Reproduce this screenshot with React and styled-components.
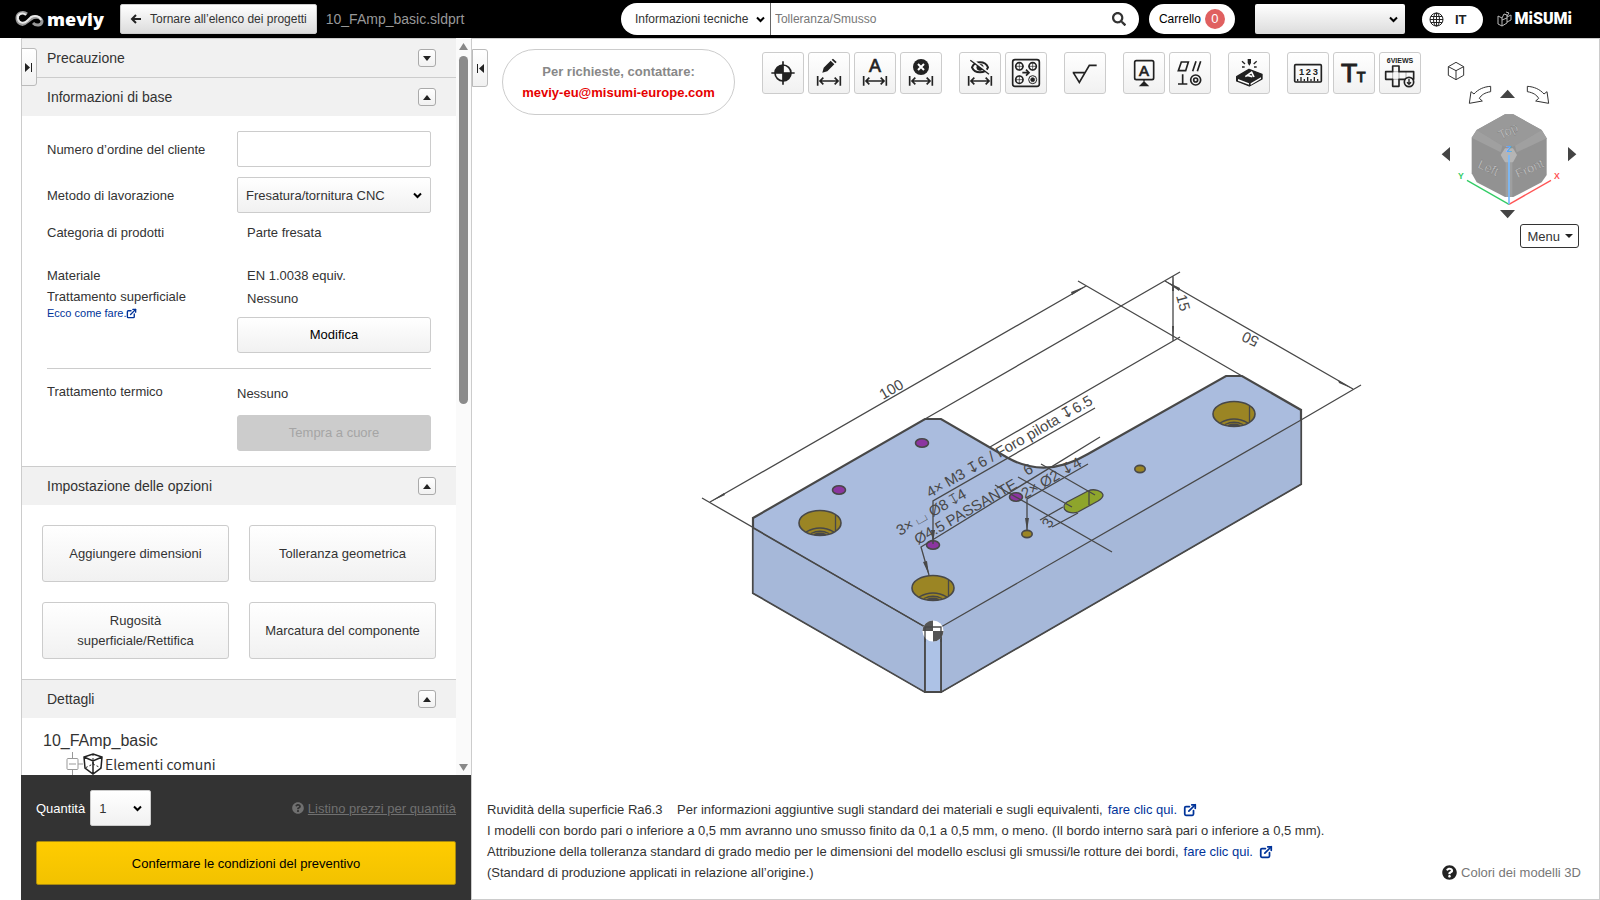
import React, { useState } from "react";
import styled, { createGlobalStyle } from "styled-components";
import { FaSearch, FaQuestionCircle } from "react-icons/fa";
import { FiExternalLink } from "react-icons/fi";

const GlobalStyle = createGlobalStyle`
    * { box-sizing: border-box; }
    body {
        margin: 0;
        background: #fff;
        color: #333;
        font-family: "Liberation Sans", Arial, sans-serif;
        font-size: 13px;
    }
    button, input, select { font-family: inherit; font-size: 13px; color: #333; margin: 0; }
    button { cursor: pointer; padding: 0; }
    svg { display: block; flex: none; }
`;

const Page = styled.div`
    display: flex;
    flex-direction: column;
    height: 100vh;
`;

/* ---------- header ---------- */
const Header = styled.header`
    display: flex;
    align-items: center;
    height: 38px;
    padding: 0 28px 0 15px;
    background: #000;
`;
const Brand = styled.a`
    display: flex;
    align-items: center;
    gap: 3px;
    width: 105px;
    color: #fff;
    font: 800 18px/30px "Open Sans", sans-serif;
    text-decoration: none;
`;
const BackButton = styled.button`
    display: flex;
    align-items: center;
    gap: 9px;
    height: 30px;
    padding: 0 9px;
    border: 1px solid #ccc;
    border-radius: 2px;
    background: linear-gradient(#fff, #dcdcdc);
    font-size: 12px;
    white-space: nowrap;
`;
const FileName = styled.span`
    flex: 1;
    padding-left: 9px;
    color: #999;
    font-size: 14px;
`;
const SearchBox = styled.form`
    display: flex;
    align-items: center;
    width: 518px;
    height: 32px;
    padding: 0 13px 0 10px;
    border-radius: 16px;
    background: #fff;
`;
const SearchInput = styled.input`
    flex: 1;
    border: 0;
    padding: 0 4px;
    outline: 0;
    font-size: 12px;
    &::placeholder { color: #777; }
`;
const IconButton = styled.button`
    border: 0;
    background: transparent;
`;
const Cart = styled.button`
    display: flex;
    align-items: center;
    gap: 4px;
    height: 30px;
    margin: 0 20px 0 10px;
    padding: 0 10px;
    border: 0;
    border-radius: 15px;
    background: #fff;
    color: #000;
    font-size: 12px;
`;
const Badge = styled.span`
    width: 20px;
    border-radius: 10px;
    background: #e06060;
    color: #fff;
    font-size: 13px;
    line-height: 20px;
    text-align: center;
`;
const Lang = styled.button`
    display: flex;
    align-items: center;
    gap: 11px;
    height: 27px;
    margin-left: 17px;
    padding: 0 16px 0 7px;
    border: 0;
    border-radius: 14px;
    background: #fff;
    color: #222;
    font-weight: 700;
`;
const Maker = styled.a`
    display: flex;
    align-items: center;
    gap: 3px;
    margin-left: 14px;
    color: #fff;
    font: 900 16px/30px Roboto, sans-serif;
    text-decoration: none;
`;

/* ---------- drop-downs ---------- */
const SelectBox = styled.span`
    position: relative;
    display: block;
    width: ${(props) => props.$width || "100%"};
    svg {
        position: absolute;
        top: 50%;
        right: ${(props) => props.$inset || 9}px;
        margin-top: -3px;
        pointer-events: none;
    }
`;
const Select = styled.select`
    appearance: none;
    display: block;
    width: 100%;
    height: 36px;
    padding: 0 20px 0 8px;
    border: 1px solid #ccc;
    border-radius: 2px;
    background: linear-gradient(#fff, #f1f1f1);
`;
const SearchKind = styled(Select)`
    height: 32px;
    padding: 0 16px 0 4px;
    border-width: 0 1px 0 0;
    border-color: #666;
    border-radius: 0;
    background: transparent;
    font-size: 12px;
`;
const UserSelect = styled(Select)`
    height: 30px;
    border: 0;
    background: linear-gradient(#fff, #dcdcdc);
`;

/* ---------- left panel ---------- */
const Body = styled.div`
    display: flex;
    flex: 1;
    min-height: 0;
    padding-left: 21px;
`;
const Side = styled.aside`
    position: relative;
    display: flex;
    flex-direction: column;
    width: 450px;
`;
const Scroller = styled.div`
    display: flex;
    flex: 1;
    min-height: 0;
    border-left: 1px solid #ccc;
`;
const Sections = styled.div`
    flex: 1;
    overflow: hidden;
`;
const ScrollTrack = styled.div`
    display: flex;
    flex-direction: column;
    align-items: center;
    width: 15px;
    padding: 5px 0 4px;
    background: #fafafa;
`;
const ScrollThumb = styled.div`
    width: 9px;
    height: 348px;
    margin: 6px 0 auto;
    border-radius: 5px;
    background: #8b8b8b;
`;
const SectionHead = styled.div`
    display: flex;
    align-items: center;
    justify-content: space-between;
    height: 39px;
    padding: 0 20px 0 25px;
    border-top: 1px solid #ccc;
    background: #f1f1f1;
`;
const SectionTitle = styled.h2`
    margin: 0;
    font-size: 14px;
    font-weight: 400;
`;
const Fold = styled.button`
    display: grid;
    place-items: center;
    width: 18px;
    height: 18px;
    border: 1px solid #aaa;
    border-radius: 3px;
    background: linear-gradient(#fff, #f1f1f1);
`;
const BasicInfo = styled.div`
    padding: 15px 25px 7px;
`;
const FieldRow = styled.div`
    display: grid;
    grid-template-columns: 190px 1fr;
    align-items: ${(props) => (props.$top ? "start" : "center")};
    margin-bottom: ${(props) => props.$gap || 0}px;
    line-height: 21px;
`;
const Value = styled.div`
    padding-left: ${(props) => (props.$flush ? 0 : 10)}px;
    line-height: ${(props) => props.$line || 20}px;
`;
const TextInput = styled.input`
    width: 100%;
    height: 36px;
    padding: 0 8px;
    border: 1px solid #ccc;
    border-radius: 2px;
`;
const GreyButton = styled.button`
    width: 100%;
    height: ${(props) => props.$height || 36}px;
    margin-top: ${(props) => props.$space || 0}px;
    padding: 0 14px;
    border: 1px solid #ccc;
    border-radius: 3px;
    background: linear-gradient(#fff, #f1f1f1);
    line-height: 20px;
    color: ${(props) => (props.$strong ? "#000" : "#333")};
    &:disabled { background: #ccc; color: #a5a5a5; }
`;
const Rule = styled.hr`
    margin: 15px 0 12px;
    border: 0;
    border-top: 1px solid #ccc;
`;
const BlueLink = styled.a`
    display: flex;
    align-items: center;
    gap: ${(props) => (props.$small ? 0 : 6)}px;
    color: #039;
    font-size: ${(props) => (props.$small ? 11 : 13)}px;
    line-height: ${(props) => (props.$small ? 13 : 21)}px;
    text-decoration: none;
`;
const Options = styled.div`
    display: grid;
    grid-template-columns: 1fr 1fr;
    gap: 20px;
    padding: 20px;
`;
const Tree = styled.div`
    padding: 12px 20px 0 21px;
`;
const TreeTitle = styled.div`
    font-size: 16px;
    line-height: 22px;
`;
const TreeRow = styled.div`
    display: flex;
    align-items: center;
    padding-left: 23px;
    font-family: "Noto Sans CJK JP", sans-serif;
    font-size: 14px;
    line-height: 24px;
`;
const Order = styled.div`
    height: 125px;
    padding: 15px;
    background: #333;
    color: #fff;
`;
const OrderRow = styled.div`
    display: flex;
    align-items: center;
    gap: 5px;
    margin-bottom: 15px;
`;
const PriceLink = styled.a`
    display: flex;
    align-items: center;
    gap: 4px;
    margin-left: auto;
    color: #707070;
    text-decoration: none;
    span { text-decoration: underline; }
`;
const Confirm = styled.button`
    width: 100%;
    height: 44px;
    border: 1px solid #a88a10;
    border-radius: 2px;
    background: linear-gradient(#fc0, #f2c200);
    color: #000;
`;
const SideTab = styled.button`
    position: absolute;
    top: 10px;
    left: 0;
    z-index: 1;
    display: grid;
    place-items: center;
    width: 16px;
    height: 38px;
    border: 1px solid #bbb;
    border-radius: 0 3px 3px 0;
    background: linear-gradient(#fff, #f1f1f1);
`;

/* ---------- viewer ---------- */
const Viewer = styled.main`
    position: relative;
    display: flex;
    flex: 1;
    flex-direction: column;
    min-width: 0;
    border: 1px solid #ccc;
`;
const ViewerTop = styled.div`
    display: flex;
    align-items: flex-start;
    padding: 10px 11px 0 30px;
`;
const Contact = styled.div`
    width: 233px;
    height: 66px;
    padding: 11px 0;
    border: 1px solid #ccc;
    border-radius: 33px;
    color: #888;
    font-weight: 700;
    line-height: 21px;
    text-align: center;
    a { color: #e60000; text-decoration: none; }
`;
const Toolbar = styled.div`
    display: flex;
    gap: 17px;
    margin: 3px auto 0 27px;
`;
const ToolGroup = styled.div`
    display: flex;
    gap: 4px;
`;
const Tool = styled.button`
    width: 42px;
    height: 42px;
    border: 1px solid #ccc;
    border-radius: 3px;
    background: linear-gradient(#fff, #f1f1f1);
    svg text { fill: #222; }
`;
const Navigator = styled.div`
    display: flex;
    flex-direction: column;
    align-items: flex-end;
    padding-top: 11px;
`;
const MenuButton = styled.button`
    display: flex;
    align-items: center;
    gap: 5px;
    height: 24px;
    margin: 4px 9px 0 0;
    padding: 0 5px 0 6px;
    border: 1px solid #333;
    border-radius: 3px;
    background: #fff;
`;
const Stage = styled.div`
    display: flex;
    flex: 1;
    align-items: flex-start;
    justify-content: center;
    padding-top: 12px;
    min-height: 0;
`;
const Notes = styled.footer`
    display: flex;
    align-items: flex-end;
    justify-content: space-between;
    padding: 0 18px 16px 15px;
    line-height: 21px;
    p { margin: 0; display: flex; gap: 5px; }
`;
const Legend = styled.a`
    display: flex;
    align-items: center;
    gap: 4px;
    color: #777;
    text-decoration: none;
    svg { color: #222; }
`;

const Triangle = ({ dir = "down", w = 8, h = 5, color = "#222" }) => (
    <svg width={w} height={h} viewBox="0 0 10 6" preserveAspectRatio="none" fill={color}>
        <path d={dir === "down" ? "M0 0H10L5 6Z" : "M0 6H10L5 0Z"} />
    </svg>
);

const Chevron = () => (
    <svg width="9" height="7" viewBox="0 0 9 7" fill="none" stroke="#000" strokeWidth="2">
        <path d="M1 1.500l3.500 3.500L8 1.500" />
    </svg>
);

const InfinityMark = () => (
    <svg width="29" height="17" viewBox="0 0 29 17" fill="none">
        <path d="M12 3C8 0 2 2 2 7s5 9 10 4l4-3c4-3 10-2 11 2 0 5-6 5-9 2" stroke="#999" strokeWidth="3" />
        <path d="M11 4C7 1 2 3 3 8c1 4 6 5 9 2l4-4c4-2 9-1 10 3" stroke="#e8e8e8" strokeWidth="2" />
    </svg>
);

const MakerMark = () => (
    <svg width="15" height="16" viewBox="0 0 15 16" fill="none" stroke="#bbb">
        <path d="M1 5l4 2v8l-4-2zM5 15l5-3V7L5 9M5 7l2-4 3 1v3M10 11l4-2V4l-4 2M9 1l3 1-2 3" />
    </svg>
);

const Globe = () => (
    <svg width="15" height="15" viewBox="0 0 15 15" fill="none" stroke="#222">
        <circle cx="7.5" cy="7.5" r="6.5" />
        <ellipse cx="7.5" cy="7.5" rx="3" ry="6.5" />
        <path d="M7.5 1v13M1 7.5h13M2 4.5h11M2 10.5h11" />
    </svg>
);

// arrow between two bars, shared by the dimension tools
const DimArrow = () => (
    <path d="M29 72v29M97 72v29M37 87h53M46 77l-10 10 10 10M80 77l10 10-10 10" strokeWidth="5" />
);

const toolIcons = {
    origin: (
        <>
            <circle cx="63" cy="63" r="24" strokeWidth="5" />
            <path d="M63 28v70M28 63h70" strokeWidth="5" />
            <path d="M63 63V39A24 24 0 0 0 39 63zM63 63v24a24 24 0 0 0 24-24z" fill="#222" />
        </>
    ),
    edit: (
        <>
            <path d="M43 62l4-15 21-21 11 11-21 21zM71 23l4-3 11 10-4 4z" fill="#222" stroke="none" />
            <DimArrow />
        </>
    ),
    text: (
        <>
            <text x="63" y="61" fontSize="54" textAnchor="middle" strokeWidth="2">A</text>
            <DimArrow />
        </>
    ),
    remove: (
        <>
            <circle cx="63" cy="45" r="24" fill="#222" stroke="none" />
            <path d="M54 36l18 18M72 36L54 54" stroke="#fff" strokeWidth="6" />
            <DimArrow />
        </>
    ),
    hide: (
        <>
            <path d="M39 46c8-20 40-20 48 0-8 20-40 20-48 0z" strokeWidth="6" />
            <circle cx="63" cy="46" r="10" fill="#222" />
            <path d="M38 22l54 42" stroke="#f8f8f8" strokeWidth="7" />
            <path d="M34 25l56 42" strokeWidth="4" />
            <DimArrow />
        </>
    ),
    holes: (
        <>
            <rect x="23" y="23" width="80" height="80" rx="7" strokeWidth="5" />
            <g strokeWidth="5">
                <circle cx="43" cy="43" r="11" />
                <circle cx="83" cy="43" r="11" />
                <circle cx="43" cy="83" r="11" />
            </g>
            <path d="M43 30v26M30 43h26M83 30v26M70 43h26M43 70v26M30 83h26" strokeWidth="2" />
            <circle cx="83" cy="83" r="12" strokeWidth="3" />
            <circle cx="83" cy="83" r="6" fill="#222" strokeWidth="2" />
            <path d="M52 62h18M63 53l9 9-9 9" strokeWidth="5" />
        </>
    ),
    surface: <path d="M26 62h37M28 62l18 29 30-51h22" strokeWidth="5" />,
    datum: (
        <>
            <rect x="35" y="26" width="57" height="57" rx="5" strokeWidth="5" />
            <text x="63" y="71" fontSize="45" textAnchor="middle" strokeWidth="2">A</text>
            <path d="M63 83v12M52 101l11-11 11 11z" fill="#222" strokeWidth="4" />
        </>
    ),
    geometric: (
        <>
            <path d="M37 30h21l-8 26H28zM81 28l-10 30M95 28L85 58M27 96h28M41 67v29" strokeWidth="5" />
            <circle cx="80" cy="84" r="15" strokeWidth="5" />
            <circle cx="80" cy="84" r="6" strokeWidth="5" />
        </>
    ),
    laser: (
        <>
            <path d="M26 74l37-22 39 15v14L64 102 26 87z" fill="#222" strokeWidth="4" strokeLinejoin="round" />
            <path d="M30 81l33 13v4L30 86zM68 94l31-18v4L68 99z" fill="#fff" stroke="none" />
            <path d="M52 74l19-13 7 14M58 70l15 4" stroke="#fff" strokeWidth="5" />
            <path d="M59 21h10v12l-5 8-5-8z" fill="#222" stroke="none" />
            <path d="M42 28l9 8M86 28l-9 8M42 45h8M78 45h8" strokeWidth="4" />
        </>
    ),
    ruler: (
        <>
            <rect x="23" y="38" width="80" height="52" rx="3" strokeWidth="5" />
            <g fontSize="28" fontWeight="700" textAnchor="middle" stroke="none">
                <text x="44" y="69">1</text>
                <text x="64" y="69">2</text>
                <text x="85" y="69">3</text>
            </g>
            <path d="M32 88v-7M42 88V75M52 88v-7M62 88V75M72 88v-7M82 88V75M92 88v-7" strokeWidth="4" />
        </>
    ),
    font: (
        <>
            <text x="24" y="91" fontSize="80" strokeWidth="3">T</text>
            <text x="71" y="91" fontSize="43" strokeWidth="3">T</text>
        </>
    ),
    views: (
        <>
            <text x="63" y="33" fontSize="21" fontWeight="700" textAnchor="middle" stroke="none">6VIEWS</text>
            <path d="M41 42h19v17h44v23H60v21H41V82H20V59h21z" strokeWidth="5" strokeLinejoin="round" />
            <path d="M41 59h19v23H41zM81 59v22" strokeWidth="1" />
            <circle cx="90" cy="90" r="14" fill="#f5f5f5" strokeWidth="5" />
            <path d="M90 81v15M84 91l6 6 6-6" strokeWidth="4" />
        </>
    ),
};

const toolGroups = [
    [["origin", "Origine"], ["edit", "Modifica quota"], ["text", "Testo quota"], ["remove", "Elimina quota"]],
    [["hide", "Nascondi quota"], ["holes", "Gruppi di fori"]],
    [["surface", "Rugosità"]],
    [["datum", "Riferimento"], ["geometric", "Tolleranza geometrica"]],
    [["laser", "Marcatura"]],
    [["ruler", "Misura"], ["font", "Dimensione testo"], ["views", "Sei viste"]],
];

const ViewCube = () => (
    <svg width="150" height="160" viewBox="114 60 450 480">
        <g fill="none" stroke="#333" strokeWidth="3">
            <path d="M168 67l23 13v26l-23 13-23-13V80zM145 80l23 12 23-12M168 92v27" />
            <path d="M272 139v16c-18 3-28 10-34 20l9 8-39 7 5-35 9 7c12-14 30-22 50-23z" />
            <path d="M382 139v16c18 3 28 10 34 20l-9 8 39 7-5-35-9 7c-12-14-30-22-50-23z" />
        </g>
        <path d="M300 174h45l-22-25zM300 510h45l-22 25zM150 321v43l-25-21zM504 321v43l25-21z" fill="#444" />
        <path d="M315 223h25l85 47 15 25v110l-15 22-85 44h-25l-85-44-15-27V293l15-23z" fill="#929292" />
        <path d="M315 223h25l85 47-80 47-18 8-20-8-77-47z" fill="#999" />
        <path d="M230 270l77 47-5 20-87-44zM425 270l-80 47 5 20 90-42z" fill="#a0a0a0" />
        <path d="M317 366h20v105h-20z" fill="#9f9f9f" />
        <path d="M315 325h24l12 20-12 22h-24l-13-22z" fill="#b5b5b5" />
        <g fontSize="38" fill="#d2d2d2" stroke="#6c6c6c" strokeWidth="1" textAnchor="middle">
            <text transform="translate(330 285) rotate(-27)">Top</text>
            <text transform="translate(260 395) rotate(25)">Left</text>
            <text transform="translate(394 397) rotate(-24)">Front</text>
        </g>
        <g strokeWidth="4">
            <path d="M327 493L201 421" stroke="#3c6" />
            <path d="M327 493l126-72" stroke="#f55" />
            <path d="M327 493V345" stroke="#7bf" strokeWidth="5" />
        </g>
        <g fontSize="26" fontWeight="700" textAnchor="middle">
            <text x="183" y="418" fill="#3c6">Y</text>
            <text x="471" y="418" fill="#f55">X</text>
            <text x="327" y="336" fill="#5af">Z</text>
        </g>
    </svg>
);

const counterbores = [[820, 523], [933, 588], [1234, 414]];
const tapped = [[922, 443], [839, 490], [1016, 497], [933, 545]];
const drilled = [[1027, 534], [1140, 469]];

const Model = () => (
    <svg width="673" height="440" viewBox="699 260 673 440" fill="none" stroke="#484848" strokeWidth="1.3">
        <path
            d="M753 518L925 419H941L1008 458Q1046 479 1088 454L1226 376H1242L1301 410V484L941 692H925L753 593Z"
            fill="#aabcde"
            strokeWidth="2.2"
        />
        <path d="M753 528L925 627V692L753 593ZM941 627L1301 420V484L941 692Z" fill="#a6b8d9" />
        <path d="M925 627h16v65h-16z" fill="#adc2e6" strokeWidth="1.8" />
        {counterbores.map(([x, y]) => (
            <g key={x} transform={`translate(${x} ${y})`}>
                <ellipse rx="21" ry="12.5" fill="#9b8524" strokeWidth="1.6" />
                <path d="M15.5-8v16M-14 9Q0 1 14 9M-9 10.5Q0 6 9 10.5" />
                <path d="M-6 11.5Q0 9 6 11.5Z" fill="#484848" />
            </g>
        ))}
        {tapped.map(([x, y]) => (
            <ellipse key={x} cx={x} cy={y} rx="6.5" ry="4.3" fill="#8c35a0" strokeWidth="1.6" />
        ))}
        {drilled.map(([x, y]) => (
            <ellipse key={x} cx={x} cy={y} rx="5.2" ry="3.6" fill="#9b8524" strokeWidth="1.6" />
        ))}
        <path
            d="M1067 502L1088 491C1094 488 1102 491 1103 495Q1103 498 1098 501L1078 512C1072 514 1064 512 1064 507Q1064 504 1067 502ZM1089 491v14"
            fill="#8ea52c"
        />

        {/* overall dimensions */}
        <path d="M710 502L1086 286M702 498L925 627M1078 281L1242 376" />
        <path d="M925 419L1180 272M990 447L1180 337M1173 276V341" />
        <path d="M1165 281L1353 389M1361 385L1301 420" />
        {/* leaders and slot dimensions */}
        <path d="M933 544V501L1095 408M929 575L921 547L1100 437M1027 531V499L1088 464" />
        <path d="M1041 464L1095 495M1018 477L1072 507M995 485L1112 552M1040 520L1063 507M1052 527L1078 513" />
        <g fill="#484848" stroke="none">
            <path d="M710 502l14-9 1 2zM1086 286l-14 9-1-3zM1173 276l1 15h-2zM1173 341l1-15h-2zM1165 281l15 7-1 3zM1353 389l-14-6-1-3z" />
            <path d="M929 575l-6-13 4-1zM933 544l-2-14h4zM1027 531l-2-13h4z" />
        </g>

        <g fill="#484848" stroke="none" fontSize="15">
            <text transform="translate(883 400) rotate(-30)">100</text>
            <text transform="translate(1176 296) rotate(75)">15</text>
            <text transform="translate(1260 338) rotate(205)">50</text>
            <text transform="translate(930 498) rotate(-30)">4× M3 ↧6 / Foro pilota ↧6.5</text>
            <text transform="translate(900 536) rotate(-30)">3× ⌴ Ø8 ↧4</text>
            <text transform="translate(918 545) rotate(-30)">Ø4.5 PASSANTE</text>
            <text transform="translate(1025 499) rotate(-30)">2× Ø2 ↧4</text>
            <text transform="translate(1027 476) rotate(-30)">6</text>
            <text transform="translate(1050 529) rotate(-60)">3</text>
        </g>

        {/* model origin */}
        <g stroke="none">
            <circle cx="933" cy="631" r="10.5" fill="#fff" />
            <path d="M933 631V620.5A10.5 10.5 0 0 0 922.5 631ZM933 631v10.5A10.5 10.5 0 0 0 943.5 631Z" fill="#555" />
        </g>
        <path d="M925 627h16v15M925 627v15" />
    </svg>
);

const SectionBar = ({ title, closed }) => (
    <SectionHead>
        <SectionTitle>{title}</SectionTitle>
        <Fold type="button" aria-label={title}>
            <Triangle dir={closed ? "down" : "up"} />
        </Fold>
    </SectionHead>
);

function SidePanel() {
    const [orderNo, setOrderNo] = useState("");

    return (
        <Side>
            <SideTab type="button" aria-label="Chiudi pannello">
                <svg width="8" height="9" viewBox="0 0 8 9" fill="#222">
                    <path d="M0 0l5 4.5L0 9zM6 0h1v9H6z" />
                </svg>
            </SideTab>
            <Scroller>
                <Sections>
                    <SectionBar title="Precauzione" closed />
                    <SectionBar title="Informazioni di base" />
                    <BasicInfo>
                        <FieldRow $gap={10}>
                            <label htmlFor="orderNo">Numero d’ordine del cliente</label>
                            <TextInput id="orderNo" value={orderNo} onChange={(e) => setOrderNo(e.target.value)} />
                        </FieldRow>
                        <FieldRow $gap={9}>
                            <label htmlFor="method">Metodo di lavorazione</label>
                            <SelectBox>
                                <Select id="method">
                                    <option>Fresatura/tornitura CNC</option>
                                </Select>
                                <Chevron />
                            </SelectBox>
                        </FieldRow>
                        <FieldRow $gap={22}>
                            <span>Categoria di prodotti</span>
                            <Value>Parte fresata</Value>
                        </FieldRow>
                        <FieldRow $top>
                            <div>
                                <div>Materiale</div>
                                <div>Trattamento superficiale</div>
                                <BlueLink href="#guida" $small>
                                    Ecco come fare.
                                    <FiExternalLink size={11} strokeWidth={3} />
                                </BlueLink>
                            </div>
                            <div>
                                <Value $line={22}>EN 1.0038 equiv.</Value>
                                <Value $line={24}>Nessuno</Value>
                                <GreyButton type="button" $strong $space={6}>Modifica</GreyButton>
                            </div>
                        </FieldRow>
                        <Rule />
                        <FieldRow $top>
                            <span>Trattamento termico</span>
                            <div>
                                <Value $flush $line={26}>Nessuno</Value>
                                <Value $flush $line={52}>
                                    <GreyButton type="button" disabled>Tempra a cuore</GreyButton>
                                </Value>
                            </div>
                        </FieldRow>
                    </BasicInfo>
                    <SectionBar title="Impostazione delle opzioni" />
                    <Options>
                        <GreyButton type="button" $height={57}>Aggiungere dimensioni</GreyButton>
                        <GreyButton type="button" $height={57}>Tolleranza geometrica</GreyButton>
                        <GreyButton type="button" $height={57}>Rugosità superficiale/Rettifica</GreyButton>
                        <GreyButton type="button" $height={57}>Marcatura del componente</GreyButton>
                    </Options>
                    <SectionBar title="Dettagli" />
                    <Tree>
                        <TreeTitle>10_FAmp_basic</TreeTitle>
                        <TreeRow>
                            <svg width="39" height="24" viewBox="0 0 39 24" fill="none" stroke="#999">
                                <path d="M6.5 0v6M6.5 18v6M12 12h5M3 12h7" />
                                <rect x="1" y="6.5" width="11" height="11" rx="1" />
                                <path
                                    d="M27 2l9 3-1 11-8 6-8-6-1-11zM18 5l9 4 9-4M27 9v13"
                                    stroke="#222"
                                    strokeWidth="1.5"
                                />
                                <path d="M27 2v10l-8 4M27 12l8 4" stroke="#222" strokeDasharray="2 2" />
                            </svg>
                            Elementi comuni
                        </TreeRow>
                    </Tree>
                </Sections>
                <ScrollTrack>
                    <Triangle dir="up" w={9} h={7} color="#888" />
                    <ScrollThumb />
                    <Triangle w={9} h={7} color="#888" />
                </ScrollTrack>
            </Scroller>
            <Order>
                <OrderRow>
                    <label htmlFor="qty">Quantità</label>
                    <SelectBox $width="61px">
                        <Select id="qty">
                            <option>1</option>
                            <option>2</option>
                        </Select>
                        <Chevron />
                    </SelectBox>
                    <PriceLink href="#listino">
                        <FaQuestionCircle size={12} />
                        <span>Listino prezzi per quantità</span>
                    </PriceLink>
                </OrderRow>
                <Confirm type="button">Confermare le condizioni del preventivo</Confirm>
            </Order>
        </Side>
    );
}

function App() {
    return (
        <Page>
            <GlobalStyle />
            <Header>
                <Brand href="#home"><InfinityMark />meviy</Brand>
                <BackButton type="button">
                    <svg width="11" height="10" viewBox="0 0 11 10" fill="none" stroke="#222" strokeWidth="2">
                        <path d="M6 1L2 5l4 4M2 5h9" />
                    </svg>
                    Tornare all’elenco dei progetti
                </BackButton>
                <FileName>10_FAmp_basic.sldprt</FileName>
                <SearchBox onSubmit={(e) => e.preventDefault()}>
                    <SelectBox $width="140px" $inset={6}>
                        <SearchKind aria-label="Categoria di ricerca">
                            <option>Informazioni tecniche</option>
                        </SearchKind>
                        <Chevron />
                    </SelectBox>
                    <SearchInput placeholder="Tolleranza/Smusso" aria-label="Cerca" />
                    <IconButton type="submit" aria-label="Cerca"><FaSearch size={14} /></IconButton>
                </SearchBox>
                <Cart type="button">Carrello <Badge>0</Badge></Cart>
                <SelectBox $width="150px" $inset={7}>
                    <UserSelect aria-label="Utente"><option></option></UserSelect>
                    <Chevron />
                </SelectBox>
                <Lang type="button"><Globe />IT</Lang>
                <Maker href="#misumi"><MakerMark />MiSUMi</Maker>
            </Header>
            <Body>
                <SidePanel />
                <Viewer>
                    <SideTab type="button" aria-label="Apri pannello">
                        <svg width="8" height="9" viewBox="0 0 8 9" fill="#222">
                            <path d="M8 0L3 4.5 8 9zM1 0h1v9H1z" />
                        </svg>
                    </SideTab>
                    <ViewerTop>
                        <Contact>
                            Per richieste, contattare:<br />
                            <a href="mailto:meviy-eu@misumi-europe.com">meviy-eu@misumi-europe.com</a>
                        </Contact>
                        <Toolbar>
                            {toolGroups.map((group) => (
                                <ToolGroup key={group[0][0]}>
                                    {group.map(([name, label]) => (
                                        <Tool key={name} type="button" aria-label={label}>
                                            <svg width="40" height="40" viewBox="3 3 120 120" fill="none" stroke="#222">
                                                {toolIcons[name]}
                                            </svg>
                                        </Tool>
                                    ))}
                                </ToolGroup>
                            ))}
                        </Toolbar>
                        <Navigator>
                            <ViewCube />
                            <MenuButton type="button">Menu <Triangle w={8} h={4} /></MenuButton>
                        </Navigator>
                    </ViewerTop>
                    <Stage><Model /></Stage>
                    <Notes>
                        <div>
                            <p>
                                Ruvidità della superficie Ra6.3 &nbsp;&nbsp; Per informazioni aggiuntive sugli standard dei materiali e sugli equivalenti,
                                <BlueLink href="#materiali">fare clic qui. <FiExternalLink size={14} strokeWidth={3} /></BlueLink>
                            </p>
                            <p>I modelli con bordo pari o inferiore a 0,5 mm avranno uno smusso finito da 0,1 a 0,5 mm, o meno. (Il bordo interno sarà pari o inferiore a 0,5 mm).</p>
                            <p>
                                Attribuzione della tolleranza standard di grado medio per le dimensioni del modello esclusi gli smussi/le rotture dei bordi,
                                <BlueLink href="#tolleranze">fare clic qui. <FiExternalLink size={14} strokeWidth={3} /></BlueLink>
                            </p>
                            <p>(Standard di produzione applicati in relazione all’origine.)</p>
                        </div>
                        <Legend href="#colori"><FaQuestionCircle size={15} />Colori dei modelli 3D</Legend>
                    </Notes>
                </Viewer>
            </Body>
        </Page>
    );
}

export default App;
